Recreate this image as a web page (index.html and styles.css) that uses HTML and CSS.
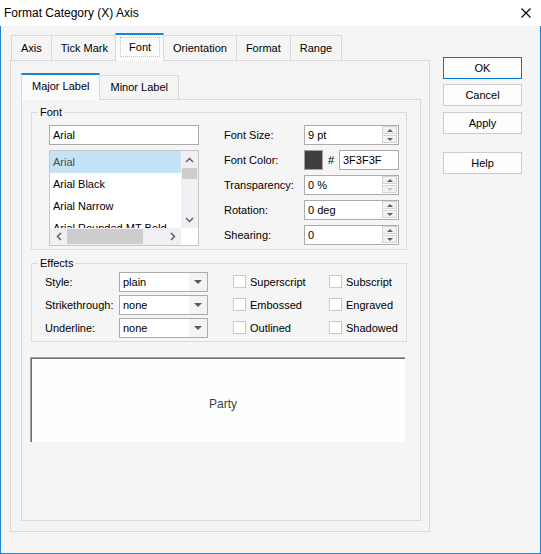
FILE: index.html
```html
<!DOCTYPE html>
<html>
<head>
<meta charset="utf-8">
<link rel="stylesheet" href="styles.css">
</head>
<body>
<div class="window">
  <div class="titlebar">
    <span class="title">Format Category (X) Axis</span>
    <svg class="close" width="10" height="10" viewBox="0 0 10 10"><path d="M0.5 0.5 L9.5 9.5 M9.5 0.5 L0.5 9.5" stroke="#000" stroke-width="1.1" fill="none"/></svg>
  </div>
  <div class="frame">
    <div class="left">
      <div class="tabs">
        <div class="tab">Axis</div>
        <div class="tab">Tick Mark</div>
        <div class="tab active"><span class="focus">Font</span></div>
        <div class="tab">Orientation</div>
        <div class="tab">Format</div>
        <div class="tab">Range</div>
      </div>
      <div class="panel">
        <div class="tabs inner">
          <div class="tab active">Major Label</div>
          <div class="tab">Minor Label</div>
        </div>
        <div class="inner-panel">
          <fieldset class="group font-group">
            <legend>Font</legend>
            <div class="font-body">
              <div class="font-left">
                <div class="textbox">Arial</div>
                <div class="listbox">
                  <div class="list-items">
                    <div class="list-item selected">Arial</div>
                    <div class="list-item">Arial Black</div>
                    <div class="list-item">Arial Narrow</div>
                    <div class="list-item">Arial Rounded MT Bold</div>
                  </div>
                  <div class="vscroll">
                    <div class="sb-btn"><svg width="9" height="6" viewBox="0 0 9 6"><path d="M1 5 L4.5 1.5 L8 5" stroke="#606060" stroke-width="1.5" fill="none"/></svg></div>
                    <div class="vthumb"></div>
                    <div class="sb-track"></div>
                    <div class="sb-btn"><svg width="9" height="6" viewBox="0 0 9 6"><path d="M1 1 L4.5 4.5 L8 1" stroke="#606060" stroke-width="1.5" fill="none"/></svg></div>
                  </div>
                  <div class="hscroll">
                    <div class="sb-btn"><svg width="6" height="9" viewBox="0 0 6 9"><path d="M5 1 L1.5 4.5 L5 8" stroke="#606060" stroke-width="1.5" fill="none"/></svg></div>
                    <div class="hthumb"></div>
                    <div class="sb-track"></div>
                    <div class="sb-btn"><svg width="6" height="9" viewBox="0 0 6 9"><path d="M1 1 L4.5 4.5 L1 8" stroke="#606060" stroke-width="1.5" fill="none"/></svg></div>
                  </div>
                  <div class="corner"></div>
                </div>
              </div>
              <div class="font-right">
                <div class="lbl">Font Size:</div>
                <div class="spin">
                  <span class="val">9 pt</span>
                  <div class="spin-btns">
                    <div class="spin-btn"><span class="tri-up"></span></div>
                    <div class="spin-btn"><span class="tri-down"></span></div>
                  </div>
                </div>
                <div class="lbl">Font Color:</div>
                <div class="color-row">
                  <span class="swatch"></span>
                  <span class="hash">#</span>
                  <span class="hexbox">3F3F3F</span>
                </div>
                <div class="lbl">Transparency:</div>
                <div class="spin">
                  <span class="val">0 %</span>
                  <div class="spin-btns">
                    <div class="spin-btn"><span class="tri-up"></span></div>
                    <div class="spin-btn"><span class="tri-down disabled"></span></div>
                  </div>
                </div>
                <div class="lbl">Rotation:</div>
                <div class="spin">
                  <span class="val">0 deg</span>
                  <div class="spin-btns">
                    <div class="spin-btn"><span class="tri-up"></span></div>
                    <div class="spin-btn"><span class="tri-down"></span></div>
                  </div>
                </div>
                <div class="lbl">Shearing:</div>
                <div class="spin">
                  <span class="val">0</span>
                  <div class="spin-btns">
                    <div class="spin-btn"><span class="tri-up"></span></div>
                    <div class="spin-btn"><span class="tri-down"></span></div>
                  </div>
                </div>
              </div>
            </div>
          </fieldset>
          <fieldset class="group effects-group">
            <legend>Effects</legend>
            <div class="effects-grid">
              <div class="lbl">Style:</div>
              <div class="select"><span class="val">plain</span><span class="arrow"><span class="tri-dd"></span></span></div>
              <label class="check"><span class="box"></span>Superscript</label>
              <label class="check"><span class="box"></span>Subscript</label>
              <div class="lbl">Strikethrough:</div>
              <div class="select"><span class="val">none</span><span class="arrow"><span class="tri-dd"></span></span></div>
              <label class="check"><span class="box"></span>Embossed</label>
              <label class="check"><span class="box"></span>Engraved</label>
              <div class="lbl">Underline:</div>
              <div class="select"><span class="val">none</span><span class="arrow"><span class="tri-dd"></span></span></div>
              <label class="check"><span class="box"></span>Outlined</label>
              <label class="check"><span class="box"></span>Shadowed</label>
            </div>
          </fieldset>
          <div class="preview"><span class="party">Party</span></div>
        </div>
      </div>
    </div>
    <div class="buttons">
      <div class="btn default">OK</div>
      <div class="btn cancel">Cancel</div>
      <div class="btn apply">Apply</div>
      <div class="btn help">Help</div>
    </div>
  </div>
</div>
</body>
</html>
```
FILE: styles.css
```css
* { box-sizing: border-box; }
body {
  margin: 0;
  font-family: "Liberation Sans", Arial, sans-serif;
  font-size: 11px;
  color: #000;
}
.window {
  width: 541px;
  height: 554px;
  display: flex;
  flex-direction: column;
  background: #f5f5f5;
}
.titlebar {
  height: 26px;
  flex: none;
  background: #fff;
  display: flex;
  align-items: center;
  justify-content: space-between;
  padding: 0 10px 0 4px;
  font-size: 12px;
}
.frame {
  flex: 1;
  display: flex;
  align-items: flex-start;
  border: 1px solid #1883d7;
  border-top: none;
  padding: 7px 0 0 9px;
}
.left { width: 420px; flex: none; }

/* tabs */
.tabs {
  display: flex;
  align-items: flex-end;
  height: 27px;
  padding-left: 1px;
}
.tab {
  height: 25px;
  line-height: 24px;
  padding: 0 9px;
  border: 1px solid #d9d9d9;
  border-bottom: none;
  margin-right: -1px;
  background: #f5f5f5;
  white-space: nowrap;
}
.tab.active {
  height: 28px;
  line-height: 22px;
  border-top: 2px solid #1883d7;
  background: #fbfbfb;
  margin: 0 -1px -1px -2px;
  padding: 2px 3px 0 4px;
  position: relative;
  z-index: 1;
}
.focus {
  display: block;
  border: 1px dotted #c4c4c4;
  padding: 0 8px;
  line-height: 18px;
}
.tabs.inner { height: 26px; }
.tabs.inner .tab { height: 24px; line-height: 23px; padding: 0 10px; }
.tabs.inner .tab.active {
  height: 27px;
  line-height: 22px;
  margin: 0 -1px -1px -1px;
  padding: 0 10px;
}

.panel {
  height: 472px;
  border: 1px solid #d9d9d9;
  padding: 12px 8px 10px 10px;
}
.inner-panel {
  height: 422px;
  border: 1px solid #d9d9d9;
  padding: 5px 13px 0 9px;
}

/* group boxes */
.group {
  margin: 0;
  padding: 0;
  border: 1px solid #dcdcdc;
  min-width: 0;
}
.group legend {
  padding: 0 2px;
  margin-left: 6px;
  line-height: 14px;
}
.font-body {
  display: flex;
  gap: 25px;
  padding: 6px 7px 3px 17px;
}
.font-left { width: 150px; }
.textbox {
  height: 20px;
  border: 1px solid #ababab;
  background: #fff;
  padding-left: 3px;
  line-height: 18px;
}
.listbox {
  margin-top: 5px;
  width: 150px;
  height: 96px;
  border: 1px solid #c6c6c6;
  background: #fff;
  display: grid;
  grid-template-columns: 1fr 17px;
  grid-template-rows: 1fr 17px;
}
.list-items { overflow: hidden; }
.list-item {
  height: 22px;
  line-height: 22px;
  padding-left: 3px;
  white-space: nowrap;
}
.list-item.selected { background: #c5e3f6; color: #4a4a4a; }
.vscroll {
  background: #f1eff4;
  display: flex;
  flex-direction: column;
}
.hscroll {
  background: #f1eff4;
  display: flex;
}
.sb-btn {
  flex: none;
  width: 17px;
  height: 17px;
  display: flex;
  align-items: center;
  justify-content: center;
}
.sb-track { flex: 1; }
.vthumb { height: 11px; margin: 0 1px; background: #cdcdcd; }
.hthumb { width: 76px; margin: 1px 0; background: #cdcdcd; }
.corner { background: #fff; }

.font-right {
  display: grid;
  grid-template-columns: 80px 95px;
  grid-auto-rows: 20px;
  row-gap: 5px;
  align-items: center;
}
.spin {
  height: 20px;
  display: flex;
  border: 1px solid #ababab;
  background: #fff;
}
.val {
  flex: 1;
  padding-left: 3px;
  line-height: 18px;
}
.spin-btns {
  width: 15px;
  display: flex;
  flex-direction: column;
  gap: 1px;
  margin: 0 1px 1px 0;
}
.spin-btn {
  height: 8px;
  border: 1px solid #d4d4d4;
  background: #f2f2f2;
  display: flex;
  align-items: center;
  justify-content: center;
}
.tri-up, .tri-down {
  width: 0;
  height: 0;
  border-left: 3px solid transparent;
  border-right: 3px solid transparent;
}
.tri-up { border-bottom: 3px solid #606060; }
.tri-down { border-top: 3px solid #606060; }
.tri-down.disabled { border-top-color: #c4c4c4; }
.color-row {
  display: flex;
  align-items: center;
  height: 20px;
}
.swatch {
  width: 19px;
  height: 20px;
  background: #3f3f3f;
  border: 1px solid #a0a0a0;
}
.hash { width: 16px; text-align: center; }
.hexbox {
  width: 60px;
  height: 20px;
  border: 1px solid #ababab;
  background: #fff;
  padding-left: 3px;
  line-height: 18px;
}

/* effects */
.effects-group { margin-top: 6px; }
.effects-grid {
  display: grid;
  grid-template-columns: 74px 114px 96px auto;
  grid-auto-rows: 21px;
  row-gap: 2px;
  align-items: center;
  padding: 1px 0 3px 13px;
}
.select {
  width: 89px;
  height: 20px;
  display: flex;
  border: 1px solid #ababab;
  background: #fff;
}
.arrow {
  width: 18px;
  background: #f3f3f3;
  display: flex;
  align-items: center;
  justify-content: center;
}
.tri-dd {
  width: 0;
  height: 0;
  border-left: 4px solid transparent;
  border-right: 4px solid transparent;
  border-top: 4px solid #5a5a5a;
}
.check {
  display: flex;
  align-items: center;
  gap: 4px;
}
.box {
  width: 13px;
  height: 13px;
  border: 1px solid #cacaca;
  background: #fff;
}

/* preview */
.preview {
  margin: 15px 0 0 -1px;
  width: 375px;
  height: 85px;
  background: #fdfffd;
  border-top: 1px solid #a0a0a0;
  border-left: 1px solid #a0a0a0;
  box-shadow: inset 1px 1px 0 #6d6d6d;
  display: flex;
  align-items: center;
  justify-content: center;
  padding: 8px 0 0 10px;
}
.party {
  font-size: 12px;
  color: #3f3f3f;
}

/* buttons */
.buttons {
  margin-left: 13px;
  padding-top: 24px;
  display: flex;
  flex-direction: column;
}
.btn {
  width: 79px;
  height: 22px;
  border: 1px solid #cccccc;
  background: #fdfdfd;
  text-align: center;
  line-height: 20px;
}
.btn.default { border-color: #0078d7; }
.btn.cancel { margin-top: 5px; }
.btn.apply { margin-top: 6px; }
.btn.help { margin-top: 18px; }
```
